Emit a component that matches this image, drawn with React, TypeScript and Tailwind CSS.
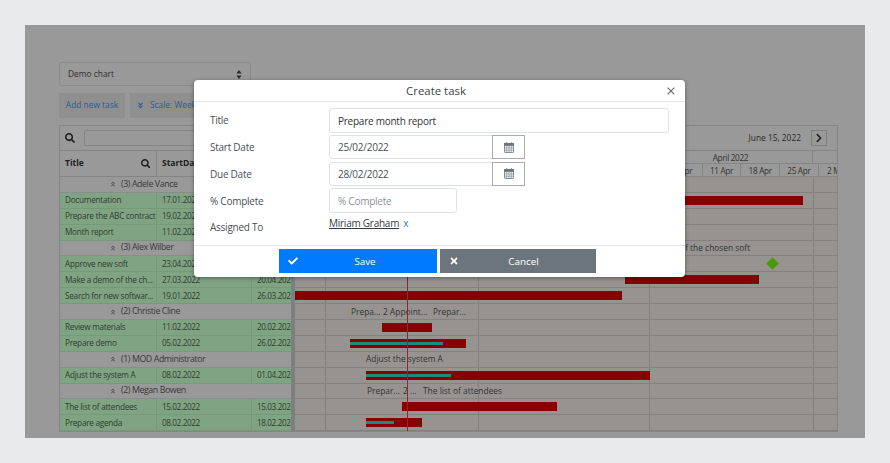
import { FaCheck, FaTimes, FaSearch, FaChevronRight, FaAngleDoubleUp, FaAngleDoubleDown } from "react-icons/fa";

const font = "font-['Open_Sans','Noto_Sans',sans-serif]";

type Row =
  | { kind: "group"; label: string }
  | { kind: "task"; title: string; start: string; due: string };

const rows: Row[] = [
  { kind: "group", label: "(3) Adele Vance" },
  { kind: "task", title: "Documentation", start: "17.01.2022", due: "25.04.2022" },
  { kind: "task", title: "Prepare the ABC contract", start: "19.02.2022", due: "01.03.2022" },
  { kind: "task", title: "Month report", start: "11.02.2022", due: "20.02.2022" },
  { kind: "group", label: "(3) Alex Wilber" },
  { kind: "task", title: "Approve new soft", start: "23.04.2022", due: "23.04.2022" },
  { kind: "task", title: "Make a demo of the ch...", start: "27.03.2022", due: "20.04.2022" },
  { kind: "task", title: "Search for new softwar...", start: "19.01.2022", due: "26.03.2022" },
  { kind: "group", label: "(2) Christie Cline" },
  { kind: "task", title: "Review materials", start: "11.02.2022", due: "20.02.2022" },
  { kind: "task", title: "Prepare demo", start: "05.02.2022", due: "26.02.2022" },
  { kind: "group", label: "(1) MOD Administrator" },
  { kind: "task", title: "Adjust the system A", start: "08.02.2022", due: "01.04.2022" },
  { kind: "group", label: "(2) Megan Bowen" },
  { kind: "task", title: "The list of attendees", start: "15.02.2022", due: "15.03.2022" },
  { kind: "task", title: "Prepare agenda", start: "08.02.2022", due: "18.02.2022" },
];

// chart rows: bar start/width measured from the left edge of the chart (x = 295)
const chart: { bar?: [number, number]; progress?: number; labels?: [number, string][]; diamond?: number }[] = [
  {},
  { bar: [300, 208] },
  {},
  {},
  { labels: [[330, "Make a demo of the chosen soft"]] },
  { diamond: 477 },
  { bar: [330, 134] },
  { bar: [0, 327] },
  { labels: [[56, "Prepa..."], [88, "2 Appoint..."], [138, "Prepar..."]] },
  { bar: [87, 50] },
  { bar: [55, 116], progress: 93 },
  { labels: [[71, "Adjust the system A"]] },
  { bar: [71, 284], progress: 85 },
  { labels: [[72, "Prepar..."], [108, "2 ..."], [128, "The list of attendees"]] },
  { bar: [107, 155] },
  { bar: [71, 56], progress: 28 },
];

function CalendarIcon() {
  return (
    <svg width="10" height="11" viewBox="0 0 10 11" fill="none" stroke="#6c757d" strokeWidth="0.8">
      <rect x="0.5" y="1.5" width="9" height="9" rx="0.6" />
      <rect x="0.5" y="1.5" width="9" height="2" fill="#6c757d" />
      <path d="M0.5 5.3H9.5M0.5 7H9.5M0.5 8.7H9.5M2.7 3.5V10.5M5 3.5V10.5M7.3 3.5V10.5" strokeWidth="0.5" />
      <path d="M2.7 0.3V2.4M7.3 0.3V2.4" strokeWidth="1.1" />
    </svg>
  );
}

function SelectCaret() {
  return (
    <svg width="6" height="9" viewBox="0 0 6 9" fill="#2c2c2c">
      <path d="M3 0L5.6 3.4H0.4Z" />
      <path d="M3 9L0.4 5.6H5.6Z" />
    </svg>
  );
}

function CloseIcon() {
  return (
    <svg width="8" height="8" viewBox="0 0 8 8" fill="none" stroke="#6b6b6b" strokeWidth="1.2">
      <path d="M0.7 0.7L7.3 7.3M7.3 0.7L0.7 7.3" />
    </svg>
  );
}

export default function App() {
  return (
    <div className={`relative h-[463px] w-[890px] overflow-hidden bg-[#e9eaec] pt-[25px] pl-[25px] text-[#333] ${font}`}>
      <div className="flex h-[413px] w-[840px] flex-col bg-[#999999] pt-[37px] pl-[34px]">
        {/* Select */}
        <div className="flex h-[24px] w-[192px] items-center justify-between rounded-[3px] border border-[#8a8a8a] px-[8px] text-[8.4px] text-[#2f2f2f]">
          <span>Demo chart</span>
          <SelectCaret />
        </div>

        {/* Buttons */}
        <div className="mt-[6px] flex h-[26px] gap-[5px] pt-px text-[8.4px] text-[#2a5a9a]">
          <div className="flex w-[66px] items-center justify-center bg-[#8f8f8f]">Add new task</div>
          <div className="flex w-[120px] items-center gap-[6px] bg-[#8f8f8f] pl-[7px]">
            <FaAngleDoubleDown className="text-[7px]" />
            <span>Scale: Weeks</span>
          </div>
        </div>

        {/* Gantt */}
        <div className="mt-[7px] flex w-[779px] flex-col border border-[#858585]">
          {/* toolbar */}
          <div className="flex h-[25px] items-center border-b border-[#858585]">
            <FaSearch className="ml-[5px] text-[10px] text-[#1f1f1f]" />
            <div className="ml-[9px] h-[16px] w-[300px] rounded-[2px] border border-[#858585]" />
            <span className="ml-auto text-[8.4px] text-[#2a2a2a]">June 15, 2022</span>
            <div className="mr-[10px] ml-[10px] flex h-[16px] w-[16px] items-center justify-center border border-[#7e7e7e] text-[10px] text-[#222]">
              <FaChevronRight />
            </div>
          </div>

          {/* body */}
          <div className="flex">
            {/* grid */}
            <div className="flex w-[231px] shrink-0 flex-col overflow-hidden">
              <div className="flex h-[26px] shrink-0 items-center border-b border-[#858585] text-[8.5px] font-bold text-[#1f1f1f]">
                <div className="flex h-full w-[97px] shrink-0 items-center justify-between border-r border-[#858585] pr-[6px] pl-[5px]">
                  <span>Title</span>
                  <FaSearch className="text-[9.5px]" />
                </div>
                <div className="flex h-full w-[95px] shrink-0 items-center border-r border-[#858585] pl-[5px]">StartDate</div>
                <div className="flex h-full flex-1 items-center overflow-hidden pl-[5px]">DueDate</div>
              </div>
              {rows.map((r, i) =>
                r.kind === "group" ? (
                  <div key={i} className="flex h-[15.9px] shrink-0 items-center gap-[5px] border-b border-[#8c8c8c] pl-[50px] text-[8.8px] tracking-[-0.4px] whitespace-nowrap text-[#3a3a3a]">
                    <FaAngleDoubleUp className="shrink-0 text-[6px] text-[#555]" />
                    <span>{r.label}</span>
                  </div>
                ) : (
                  <div key={i} className="flex h-[15.9px] shrink-0 items-center border-b border-[#78987a] bg-[#7fa383] text-[8.2px] tracking-[-0.25px] text-[#2f3f2f]">
                    <div className="flex h-full w-[97px] shrink-0 items-center overflow-hidden border-r border-[#78987a] pl-[5px] whitespace-nowrap">{r.title}</div>
                    <div className="flex h-full w-[95px] shrink-0 items-center border-r border-[#78987a] pl-[5px] tracking-[-0.4px]">{r.start}</div>
                    <div className="flex h-full w-[60px] shrink-0 items-center pl-[5px] tracking-[-0.4px] whitespace-nowrap">{r.due}</div>
                  </div>
                )
              )}
            </div>

            {/* splitter */}
            <div className="w-[4px] shrink-0 bg-[#7f7f7f]" />

            {/* timeline */}
            <div className="relative min-w-0 flex-1 overflow-hidden">
              <div className="flex h-[13px] border-b border-[#858585] text-[8.2px] leading-[13px] tracking-[-0.3px] text-[#333]">
                {[
                  [30, ""],
                  [153, "February 2022"],
                  [171, "March 2022"],
                  [164, "April 2022"],
                  [60, ""],
                ].map(([w, t], i) => (
                  <div key={i} className="shrink-0 overflow-hidden border-r border-[#858585] text-center whitespace-nowrap" style={{ width: w as number }}>{t}</div>
                ))}
              </div>
              <div className="flex h-[13px] border-b border-[#858585] pl-[369px] text-[8.2px] leading-[13px] tracking-[-0.3px] text-[#333]">
                {["4 Apr", "11 Apr", "18 Apr", "25 Apr", "2 May"].map((w) => (
                  <div key={w} className="w-[38.7px] shrink-0 overflow-hidden border-r border-[#858585] text-center whitespace-nowrap">{w}</div>
                ))}
              </div>
              <div className="relative bg-[#979391]">
                {[30, 183, 354, 518].map((x) => (
                  <div key={x} className="absolute top-0 bottom-0 w-px bg-[#827e7d]" style={{ left: x }} />
                ))}
                {chart.map((c, i) => (
                  <div key={i} className="relative flex h-[15.9px] items-center border-b border-[#858180]">
                    {c.bar && (
                      <div className="absolute flex h-[9px] items-center bg-[#870000]" style={{ left: c.bar[0], width: c.bar[1] }}>
                        {c.progress && <div className="h-[3px] bg-[#1a8c7f]" style={{ width: c.progress }} />}
                      </div>
                    )}
                    {c.labels?.map(([x, t]) => (
                      <span key={t} className="absolute pt-px text-[8.4px] whitespace-nowrap text-[#333]" style={{ left: x }}>{t}</span>
                    ))}
                    {c.diamond !== undefined && (
                      <div className="absolute h-[9px] w-[9px] rotate-45 bg-[#4a9a0a]" style={{ left: c.diamond - 4.5 }} />
                    )}
                  </div>
                ))}
                <div className="absolute top-[-4px] bottom-0 left-[112px] w-px bg-[#8b2a2a]" />
              </div>
            </div>
          </div>
        </div>
      </div>

      {/* Modal */}
      <div className="absolute top-[80px] left-[194px] flex h-[197px] w-[491px] flex-col rounded-[4px] bg-white text-[10px] tracking-[-0.25px] text-[#495057] shadow-[0_1px_4px_rgba(0,0,0,0.4)]">
        <div className="relative flex h-[22px] items-center justify-center border-b border-[#e4e6e8] text-[11.4px] tracking-normal text-[#3a3f44]">
          <span className="mr-[7px]">Create task</span>
          <div className="absolute top-[7px] right-[10px]"><CloseIcon /></div>
        </div>
        <div className="flex flex-col pt-[6px] pl-[16px]">
          <div className="flex h-[26.8px] items-start">
            <label className="flex h-[24.5px] w-[119px] items-center pt-px">Title</label>
            <div className="flex h-[24.5px] w-[340px] items-center rounded-[3px] border border-[#dee2e6] pt-[2px] pl-[8px] text-[#333]">Prepare month report</div>
          </div>
          <div className="flex h-[26.8px] items-start">
            <label className="flex h-[24.5px] w-[119px] items-center pt-px">Start Date</label>
            <div className="flex h-[24.5px] w-[164px] items-center rounded-l-[3px] border border-[#dee2e6] pt-px pl-[8px]">25/02/2022</div>
            <div className="-ml-px flex h-[24.5px] w-[33px] items-center justify-center border border-[#a8abae]"><CalendarIcon /></div>
          </div>
          <div className="flex h-[26.8px] items-start">
            <label className="flex h-[24.5px] w-[119px] items-center pt-px">Due Date</label>
            <div className="flex h-[24.5px] w-[164px] items-center rounded-l-[3px] border border-[#dee2e6] pt-px pl-[8px]">28/02/2022</div>
            <div className="-ml-px flex h-[24.5px] w-[33px] items-center justify-center border border-[#a8abae]"><CalendarIcon /></div>
          </div>
          <div className="flex h-[26.8px] items-start">
            <label className="flex h-[24.5px] w-[119px] items-center pt-px">% Complete</label>
            <div className="flex h-[24.5px] w-[128px] items-center rounded-[3px] border border-[#dee2e6] pt-px pl-[8px] text-[#8b939a]">% Complete</div>
          </div>
          <div className="flex items-start">
            <label className="w-[119px] pt-[5px]">Assigned To</label>
            <div className="flex gap-[4px] pt-px">
              <span className="text-[#343a40] underline">Miriam Graham</span>
              <span className="text-[#1f7ad1]">x</span>
            </div>
          </div>
        </div>
        <div className="mt-auto flex h-[32px] justify-start gap-[3px] border-t border-[#e4e6e8] pt-[3px] pl-[85px] text-[9.8px] tracking-normal text-white">
          <div className="relative flex h-[24px] w-[158px] items-center justify-center bg-[#007bff] pt-[2px] pl-[14px]">
            <FaCheck className="absolute top-[7px] left-[9px] text-[10px]" />
            Save
          </div>
          <div className="relative flex h-[24px] w-[156px] items-center justify-center bg-[#6c757d] pt-[2px] pl-[11px]">
            <FaTimes className="absolute top-[7px] left-[9px] text-[10px]" />
            Cancel
          </div>
        </div>
      </div>
    </div>
  );
}
